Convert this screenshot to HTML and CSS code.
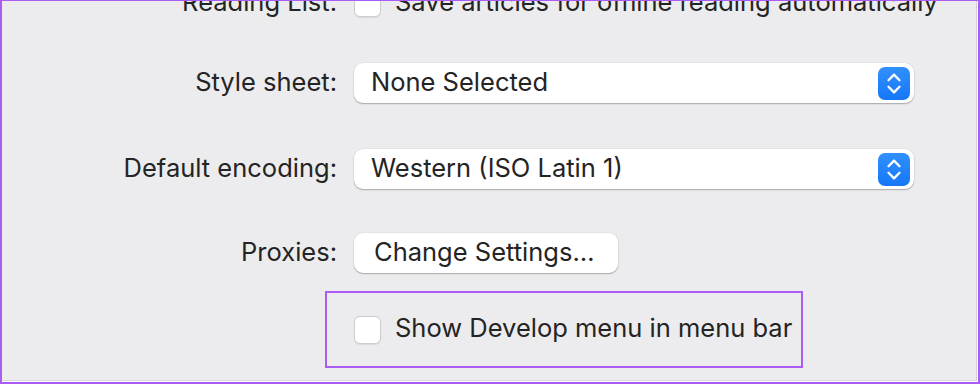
FILE: index.html
```html
<!DOCTYPE html>
<html>
<head>
<meta charset="utf-8">
<link rel="stylesheet" href="styles.css">
</head>
<body>
<div class="frame">
  <div class="panel">
    <div class="row row-reading">
      <div class="label">Reading List:</div>
      <div class="control check-line">
        <span class="checkbox"></span>
        <span class="check-text">Save articles for offline reading automatically</span>
      </div>
    </div>
    <div class="row row-style">
      <div class="label">Style sheet:</div>
      <div class="control">
        <div class="popup">
          <span class="popup-text">None Selected</span>
          <span class="stepper">
            <svg width="32" height="33" viewBox="0 0 32 33"><path d="M10.5 13.2 L16 7.6 L21.5 13.2 M10.5 19.8 L16 25.4 L21.5 19.8" fill="none" stroke="#fff" stroke-width="2.3" stroke-linecap="round" stroke-linejoin="round"/></svg>
          </span>
        </div>
      </div>
    </div>
    <div class="row row-encoding">
      <div class="label">Default encoding:</div>
      <div class="control">
        <div class="popup">
          <span class="popup-text">Western (ISO Latin 1)</span>
          <span class="stepper">
            <svg width="32" height="33" viewBox="0 0 32 33"><path d="M10.5 13.2 L16 7.6 L21.5 13.2 M10.5 19.8 L16 25.4 L21.5 19.8" fill="none" stroke="#fff" stroke-width="2.3" stroke-linecap="round" stroke-linejoin="round"/></svg>
          </span>
        </div>
      </div>
    </div>
    <div class="row row-proxies">
      <div class="label">Proxies:</div>
      <div class="control">
        <div class="button"><span class="button-text">Change Settings…</span></div>
      </div>
    </div>
    <div class="highlight">
      <span class="checkbox"></span>
      <span class="check-text">Show Develop menu in menu bar</span>
    </div>
  </div>
</div>
</body>
</html>
```

FILE: styles.css
```css
* { box-sizing: border-box; }
html, body {
  margin: 0;
  padding: 0;
  background: #ffffff;
}
body {
  font-family: Inter, "Noto Sans", sans-serif;
  font-size: 25.5px;
  line-height: 31px;
  color: #242424;
}
.frame {
  width: 980px;
  height: 384px;
  border: 2px solid #ab5cf6;
  border-top-width: 1.5px;
  background: #ffffff;
  overflow: hidden;
  padding: 0 1px 1px 0;
}
.panel {
  height: 100%;
  background: #ececee;
  border-right: 1px solid #d2d2d6;
  border-bottom: 1px solid #dcdce0;
  overflow: hidden;
}
.row {
  display: grid;
  grid-template-columns: 335px 1fr;
  column-gap: 17px;
  align-items: center;
  height: 40px;
}
.row-reading { margin-top: -18px; }
.row-style { margin-top: 40px; }
.row-encoding { margin-top: 46px; }
.row-proxies { margin-top: 44px; }
.label {
  text-align: right;
  white-space: nowrap;
  padding-bottom: 4px;
}
.control {
  display: flex;
  align-items: center;
}
.check-line { gap: 14px; }
.checkbox {
  display: inline-block;
  width: 27px;
  height: 28px;
  border-radius: 6px;
  background: #ffffff;
  border: 1px solid #cdcdcf;
  box-shadow: 0 0.5px 1px rgba(0,0,0,0.08);
  flex: none;
}
.check-text {
  white-space: nowrap;
  padding-bottom: 4px;
}
.popup {
  width: 560px;
  height: 40px;
  background: #ffffff;
  border-radius: 9px;
  box-shadow: 0 1px 1.5px rgba(0,0,0,0.28), 0 0 0 0.5px rgba(0,0,0,0.06);
  display: flex;
  align-items: center;
  justify-content: space-between;
  padding: 0 4px 0 17px;
}
.popup-text {
  white-space: nowrap;
  padding-bottom: 4px;
}
.stepper {
  width: 32px;
  height: 33px;
  border-radius: 7px;
  background: linear-gradient(#3190ff, #1577f7);
  display: flex;
}
.button {
  width: 264px;
  height: 40px;
  background: #ffffff;
  border-radius: 9px;
  box-shadow: 0 1px 1.5px rgba(0,0,0,0.28), 0 0 0 0.5px rgba(0,0,0,0.06);
  display: flex;
  align-items: center;
  padding-left: 20px;
  white-space: nowrap;
}
.button-text { padding-bottom: 4px; }
.highlight {
  margin-top: 18px;
  margin-left: 323px;
  width: 478px;
  height: 77px;
  border: 2px solid #ab5cf6;
  display: flex;
  align-items: center;
  gap: 14px;
  padding-left: 27px;
}
```
